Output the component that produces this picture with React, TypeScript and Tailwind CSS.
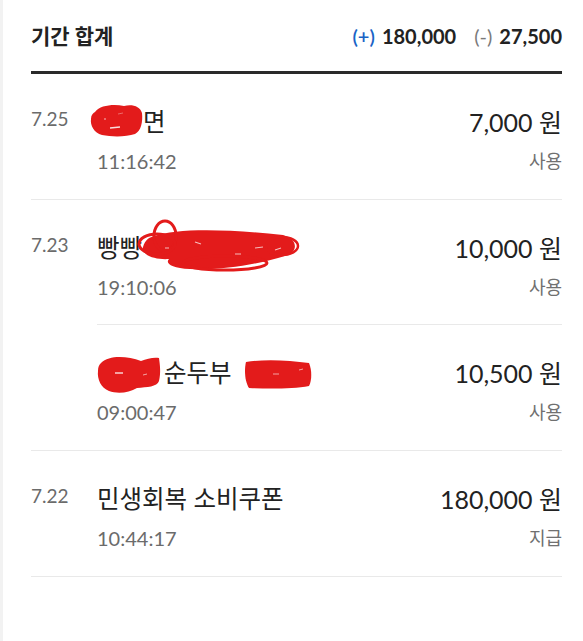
import React from "react";

const RED = "#e31b1b";

function Blob1() {
  return (
    <svg className="absolute left-[-7px] top-[-3px]" width="53" height="33" viewBox="0 0 53 33">
      <path d="M5 8 C10 1, 24 0, 34 2 C42 0, 50 2, 52 9 C53 18, 51 27, 45 30 C36 33, 22 33, 12 31 C4 29, 0 21, 1 15 C1 11, 3 9, 5 8 Z" fill={RED} />
      <path d="M20 24 L30 23" stroke="#fff" strokeWidth="1.3" opacity="0.85" />
      <path d="M14 15 L16 15" stroke="#fff" strokeWidth="1.2" opacity="0.7" />
      <path d="M28 10 L33 9" stroke="#f6a0a0" strokeWidth="1" opacity="0.6" />
    </svg>
  );
}

function Blob2() {
  return (
    <svg className="absolute left-[38px] top-[-15px]" width="165" height="54" viewBox="0 0 165 54">
      <path d="M20 18 C40 10, 95 11, 148 17 C163 21, 164 34, 150 38 C125 46, 85 53, 55 51 C36 50, 30 45, 34 41 C22 42, 6 38, 8 29 C10 22, 14 19, 20 18 Z" fill={RED} />
      <ellipse cx="30" cy="18" rx="11" ry="15" fill="none" stroke={RED} strokeWidth="3" />
      <ellipse cx="22" cy="26" rx="18" ry="10" fill="none" stroke={RED} strokeWidth="3" />
      <ellipse cx="147" cy="28" rx="16" ry="9" fill="none" stroke={RED} strokeWidth="2.5" />
      <ellipse cx="90" cy="45" rx="42" ry="7" fill="none" stroke={RED} strokeWidth="3" />
      <path d="M30 30 L34 30 M60 24 L66 26 M120 30 L128 29 M100 36 L106 36 M140 32 L146 30" stroke="#fff" strokeWidth="1.2" opacity="0.7" />
    </svg>
  );
}

function Blob3a() {
  return (
    <svg className="absolute left-0 top-[-5px]" width="66" height="41" viewBox="0 0 66 41">
      <path d="M4 10 C12 2, 30 3, 44 8 C50 6, 56 4, 62 5 C63 12, 64 20, 62 28 C60 34, 50 34, 40 35 C32 40, 20 41, 12 38 C4 35, 0 26, 1 18 C1 14, 2 12, 4 10 Z" fill={RED} />
      <path d="M18 20 L26 20" stroke="#fff" strokeWidth="1.4" opacity="0.85" />
      <path d="M46 22 L50 21" stroke="#fff" strokeWidth="1" opacity="0.6" />
    </svg>
  );
}

function Blob3b() {
  return (
    <svg className="absolute left-[146px] top-0" width="70" height="32" viewBox="0 0 70 32">
      <path d="M3 4 C20 1, 45 2, 66 5 C69 12, 69 22, 66 28 C50 31, 25 31, 6 30 C2 24, 1 12, 3 4 Z" fill={RED} />
      <path d="M30 16 L36 16 M56 12 L60 11" stroke="#fff" strokeWidth="1" opacity="0.6" />
    </svg>
  );
}

type Item = {
  title: React.ReactNode;
  time: string;
  amount: string;
  kind: string;
};

function ItemRow({ item, last }: { item: Item; last: boolean }) {
  return (
    <div className={`h-[125px] pt-[33px] ${last ? "" : "border-b border-[#e9e9e9]"}`}>
      <div className="flex items-center justify-between h-[30px]">
        <div className="relative text-[24.5px] leading-[30px] text-[#222] whitespace-nowrap">{item.title}</div>
        <div className="text-[25px] leading-[30px] text-[#222] whitespace-nowrap">{item.amount}</div>
      </div>
      <div className="mt-[11px] flex items-center justify-between h-[26px]">
        <div className="text-[20px] leading-[26px] text-[#6b6b6b]">{item.time}</div>
        <div className="text-[18px] leading-[26px] text-[#707070]">{item.kind}</div>
      </div>
    </div>
  );
}

function Group({ date, items }: { date: string; items: Item[] }) {
  return (
    <div className="flex border-b border-[#e9e9e9]">
      <div className="w-[66px] shrink-0 pt-[33px] text-[19px] leading-[24px] text-[#6b6b6b]">{date}</div>
      <div className="flex-1 flex flex-col">
        {items.map((it, i) => (
          <ItemRow key={i} item={it} last={i === items.length - 1} />
        ))}
      </div>
    </div>
  );
}

export default function App() {
  return (
    <div className="min-h-screen bg-white border-l-[3px] border-[#f2f2f2] font-['Lato','Noto_Sans_CJK_KR',sans-serif]">
      <div className="pl-[28px] pr-[21px]">
        <div className="h-[74px] flex items-center justify-between border-b-[3px] border-[#2a2a2a]">
          <div className="text-[21px] font-bold text-[#222]">기간 합계</div>
          <div className="flex items-center text-[20px] font-bold text-[#222]">
            <span className="text-[#1a63c6] font-semibold">(+)</span>
            <span className="ml-[7px]">180,000</span>
            <span className="ml-[18px] text-[#7a7a7a] font-normal">(-)</span>
            <span className="ml-[7px]">27,500</span>
          </div>
        </div>
        <Group
          date="7.25"
          items={[
            {
              title: (
                <>
                  <span className="pl-[46px]">면</span>
                  <Blob1 />
                </>
              ),
              time: "11:16:42",
              amount: "7,000 원",
              kind: "사용",
            },
          ]}
        />
        <Group
          date="7.23"
          items={[
            {
              title: (
                <>
                  <span>빵빵</span>
                  <span className="inline-block w-[160px]"></span>
                  <Blob2 />
                </>
              ),
              time: "19:10:06",
              amount: "10,000 원",
              kind: "사용",
            },
            {
              title: (
                <>
                  <span className="pl-[67px]">순두부</span>
                  <span className="inline-block w-[84px]"></span>
                  <Blob3a />
                  <Blob3b />
                </>
              ),
              time: "09:00:47",
              amount: "10,500 원",
              kind: "사용",
            },
          ]}
        />
        <Group
          date="7.22"
          items={[
            {
              title: "민생회복 소비쿠폰",
              time: "10:44:17",
              amount: "180,000 원",
              kind: "지급",
            },
          ]}
        />
      </div>
    </div>
  );
}
